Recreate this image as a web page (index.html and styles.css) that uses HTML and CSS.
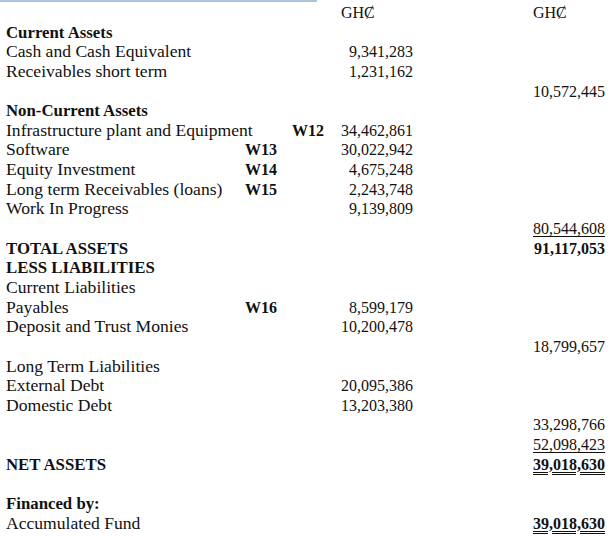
FILE: index.html
```html
<!DOCTYPE html>
<html>
<head>
<meta charset="utf-8">
<link rel="stylesheet" href="styles.css">
</head>
<body>
<div class="topline"></div>
<div class="sheet">
  <div class="row"><span></span><span></span><span class="cur c1">GHȻ</span><span class="cur c2">GHȻ</span></div>
  <div class="row"><span class="lbl b">Current Assets</span></div>
  <div class="row"><span class="lbl">Cash and Cash Equivalent</span><span></span><span class="a1">9,341,283</span></div>
  <div class="row"><span class="lbl">Receivables short term</span><span></span><span class="a1">1,231,162</span></div>
  <div class="row"><span></span><span></span><span></span><span class="a2">10,572,445</span></div>
  <div class="row"><span class="lbl b">Non-Current Assets</span></div>
  <div class="row"><span class="lbl">Infrastructure plant and Equipment</span><span class="ref far">W12</span><span class="a1">34,462,861</span></div>
  <div class="row"><span class="lbl">Software</span><span class="ref">W13</span><span class="a1">30,022,942</span></div>
  <div class="row"><span class="lbl">Equity Investment</span><span class="ref">W14</span><span class="a1">4,675,248</span></div>
  <div class="row"><span class="lbl">Long term Receivables (loans)</span><span class="ref">W15</span><span class="a1">2,243,748</span></div>
  <div class="row"><span class="lbl">Work In Progress</span><span></span><span class="a1">9,139,809</span></div>
  <div class="row"><span></span><span></span><span></span><span class="a2"><span class="u">80,544,608</span></span></div>
  <div class="row"><span class="lbl b">TOTAL ASSETS</span><span></span><span></span><span class="a2 b">91,117,053</span></div>
  <div class="row"><span class="lbl b">LESS LIABILITIES</span></div>
  <div class="row"><span class="lbl">Current Liabilities</span></div>
  <div class="row"><span class="lbl">Payables</span><span class="ref">W16</span><span class="a1">8,599,179</span></div>
  <div class="row"><span class="lbl">Deposit and Trust Monies</span><span></span><span class="a1">10,200,478</span></div>
  <div class="row"><span></span><span></span><span></span><span class="a2">18,799,657</span></div>
  <div class="row"><span class="lbl">Long Term Liabilities</span></div>
  <div class="row"><span class="lbl">External Debt</span><span></span><span class="a1">20,095,386</span></div>
  <div class="row"><span class="lbl">Domestic Debt</span><span></span><span class="a1">13,203,380</span></div>
  <div class="row"><span></span><span></span><span></span><span class="a2">33,298,766</span></div>
  <div class="row"><span></span><span></span><span></span><span class="a2"><span class="u">52,098,423</span></span></div>
  <div class="row"><span class="lbl b">NET ASSETS</span><span></span><span></span><span class="a2 b"><span class="uu">39,018,630</span></span></div>
  <div class="row"></div>
  <div class="row"><span class="lbl b">Financed by:</span></div>
  <div class="row"><span class="lbl">Accumulated Fund</span><span></span><span></span><span class="a2 b"><span class="uu">39,018,630</span></span></div>
</div>
</body>
</html>
```
FILE: styles.css
```css
html, body {
  margin: 0;
  padding: 0;
  background: #fff;
}
body {
  font-family: "Liberation Serif", "DejaVu Serif", serif;
  font-size: 16px;
  color: #111;
  width: 614px;
  height: 537px;
  overflow: hidden;
  position: relative;
}
.topline {
  position: absolute;
  top: 0;
  left: 0;
  width: 317px;
  height: 2px;
  background: #a9c4dc;
}
.sheet {
  padding: 3px 9px 0 6px;
}
.row {
  display: grid;
  grid-template-columns: 239px 90px 78px 192px;
  height: 19.65px;
  line-height: 19.65px;
  white-space: nowrap;
}
.lbl {
  overflow: visible;
  font-size: 17.6px;
}
.lbl.b {
  font-size: 16.8px;
}
.b {
  font-weight: bold;
}
.ref {
  font-weight: bold;
}
.ref.far {
  justify-self: end;
  padding-right: 11px;
}
.a1, .a2 {
  text-align: right;
}
.cur.c1 {
  padding-left: 6px;
}
.cur.c2 {
  padding-left: 120px;
}
.u {
  text-decoration: underline;
  text-underline-offset: 2px;
}
.uu {
  text-decoration: underline double;
  text-underline-offset: 2px;
}
```
